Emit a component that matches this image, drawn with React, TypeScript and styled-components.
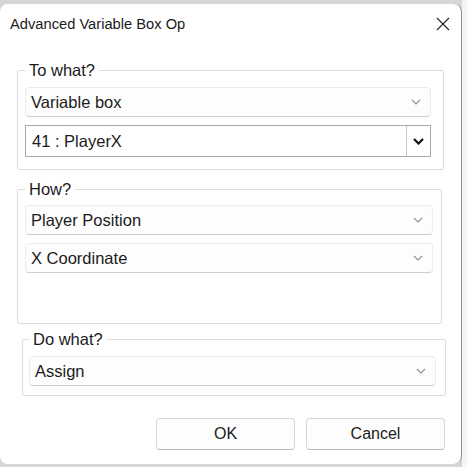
import React from 'react';
import styled, {createGlobalStyle} from 'styled-components';

const GlobalStyle = createGlobalStyle`
    html, body {
        margin: 0;
        padding: 0;
        background: #d6d6d6;
    }
    body {
        font-family: "Liberation Sans", Arial, sans-serif;
        color: #1b1b1b;
        overflow: hidden;
    }
`;

const Page = styled.div`
    width: 467px;
    height: 467px;
    padding-top: 4px;
    box-sizing: border-box;
    background: linear-gradient(90deg, #d6d6d6 0, #d6d6d6 462px, #f4f4f4 462px);
`;

const Dialog = styled.div`
    width: 462px;
    height: 460px;
    box-sizing: border-box;
    background: #fff;
    border-right: 1px solid #8c8c8c;
    border-radius: 8px;
    display: flex;
    flex-direction: column;
`;

const TitleBar = styled.div`
    height: 40px;
    display: flex;
    align-items: center;
    justify-content: space-between;
    padding: 0 10px 0 10px;
    font-size: 14.7px;
`;

const CloseBox = styled.div`
    width: 14px;
    height: 14px;
    margin-right: 1px;
    display: flex;
`;

const Group = styled.fieldset<{$left: number; $width: number; $top: number; $padR: number; $padB: number; $padT: number; $padL: number}>`
    margin: ${p => p.$top}px 0 0 ${p => p.$left}px;
    width: ${p => p.$width}px;
    box-sizing: border-box;
    border: 1px solid #dcdcdc;
    border-radius: 2px;
    padding: ${p => p.$padT}px ${p => p.$padR}px ${p => p.$padB}px ${p => p.$padL}px;
    min-width: 0;
    display: flex;
    flex-direction: column;
    gap: 8px;
`;

const Legend = styled.legend`
    font-size: 16.5px;
    line-height: 20px;
    padding: 0 4px;
    color: #1b1b1b;
`;

const Combo = styled.div`
    height: 30px;
    box-sizing: border-box;
    display: flex;
    align-items: center;
    justify-content: space-between;
    padding: 0 9px 0 5px;
    background: #fdfdfd;
    border: 1px solid #ececec;
    border-bottom-color: #cfcfcf;
    border-radius: 4px;
    font-size: 16.5px;
`;

const EditCombo = styled.div`
    height: 32px;
    box-sizing: border-box;
    display: flex;
    align-items: stretch;
    background: #fff;
    border: 1px solid #a9a9a9;
    font-size: 16.5px;
`;

const EditText = styled.div`
    flex: 1;
    display: flex;
    align-items: center;
    padding-left: 6px;
`;

const DropButton = styled.div`
    width: 23px;
    border-left: 1px solid #c4c4c4;
    display: flex;
    align-items: center;
    justify-content: center;
`;

const ButtonRow = styled.div`
    display: flex;
    justify-content: flex-end;
    gap: 11px;
    margin-top: 22px;
    padding-right: 16px;
`;

const Button = styled.button`
    width: 139px;
    height: 32px;
    box-sizing: border-box;
    background: #fdfdfd;
    border: 1px solid #d6d6d6;
    border-bottom-color: #bcbcbc;
    border-radius: 4px;
    font-family: inherit;
    font-size: 16px;
    color: #1b1b1b;
`;

function LightChevron() {
    return (
        <svg width="10" height="6" viewBox="0 0 10 6">
            <path d="M1 1 L5 5 L9 1" fill="none" stroke="#8f8f8f" strokeWidth="1.1" />
        </svg>
    );
}

function BoldChevron() {
    return (
        <svg width="11" height="7" viewBox="0 0 11 7">
            <path d="M1 1 L5.5 5.5 L10 1" fill="none" stroke="#111" strokeWidth="2.2" />
        </svg>
    );
}

function Select({value}: {value: string}) {
    return (
        <Combo>
            <span>{value}</span>
            <LightChevron />
        </Combo>
    );
}

export default function App() {
    return (
        <Page>
            <GlobalStyle />
            <Dialog>
                <TitleBar>
                    <span>Advanced Variable Box Op</span>
                    <CloseBox>
                        <svg width="14" height="14" viewBox="0 0 14 14">
                            <path d="M1 1 L13 13 M13 1 L1 13" stroke="#222" strokeWidth="1.1" />
                        </svg>
                    </CloseBox>
                </TitleBar>

                <Group $left={17} $width={427} $top={16} $padT={7} $padR={12} $padB={12} $padL={7}>
                    <Legend>To what?</Legend>
                    <Select value="Variable box" />
                    <EditCombo>
                        <EditText>41 : PlayerX</EditText>
                        <DropButton>
                            <BoldChevron />
                        </DropButton>
                    </EditCombo>
                </Group>

                <Group $left={17} $width={425} $top={9} $padT={6} $padR={8} $padB={50} $padL={7}>
                    <Legend>How?</Legend>
                    <Select value="Player Position" />
                    <Select value="X Coordinate" />
                </Group>

                <Group $left={22} $width={424} $top={5} $padT={7} $padR={9} $padB={9} $padL={6}>
                    <Legend>Do what?</Legend>
                    <Select value="Assign" />
                </Group>

                <ButtonRow>
                    <Button>OK</Button>
                    <Button>Cancel</Button>
                </ButtonRow>
            </Dialog>
        </Page>
    );
}
